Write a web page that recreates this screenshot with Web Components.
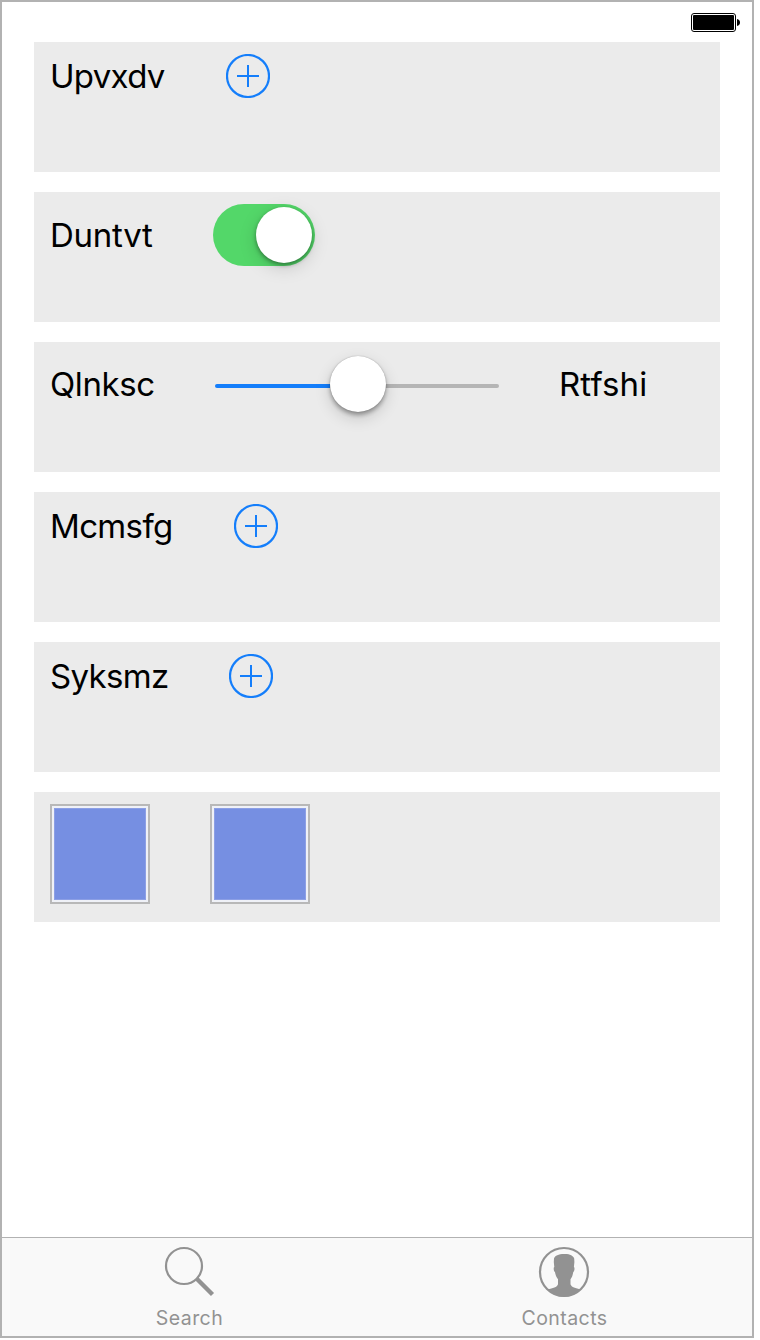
<!DOCTYPE html>
<html lang="en">
<head>
<meta charset="utf-8">
<title>Controls</title>
<style>
html,body{margin:0;background:#fff}
body{font-family:Inter,"Liberation Sans",sans-serif;color:#000}
</style>
</head>
<body>
<phone-screen>
  <status-bar slot="status"></status-bar>
  <control-row><text-label style="--w:116px;--ls:-.7px">Upvxdv</text-label><add-button></add-button></control-row>
  <control-row><text-label style="--w:103px;--ls:-.25px">Duntvt</text-label><toggle-switch></toggle-switch></control-row>
  <control-row><text-label style="--w:105px;--ls:-.4px">Qlnksc</text-label><value-slider></value-slider><text-label style="--w:90px;--ls:.1px">Rtfshi</text-label></control-row>
  <control-row><text-label style="--w:124px;--ls:-.65px">Mcmsfg</text-label><add-button></add-button></control-row>
  <control-row><text-label style="--w:119px;--ls:-.65px">Syksmz</text-label><add-button></add-button></control-row>
  <control-row><color-tile></color-tile><color-tile></color-tile></control-row>
  <tab-item slot="tabs">
    <svg slot="icon" width="52" height="52" viewBox="0 0 52 52" fill="none" stroke="#929292"><circle cx="21" cy="20" r="18" stroke-width="2.2"/><path d="M33.500 32.500L49.500 48.500" stroke-width="4.400"/></svg>Search</tab-item>
  <tab-item slot="tabs">
    <svg slot="icon" width="52" height="52" viewBox="0 0 52 52"><circle cx="26" cy="26" r="24" fill="none" stroke="#929292" stroke-width="2.200"/><path fill="#929292" d="M26 8c5.500-.3 9.300 1.500 10.200 4.500l.2 3.500-.5 5c1 .3.700 4.500-.7 5.200-.5 3-1.200 5-2.700 7v5c1 3 5 4 10.500 5.200C38.500 48 32.500 50.500 26 50.500S13.500 48 9.500 43.400C15 42.200 19 41.200 20 38.200v-5c-1.500-2-2.500-4-3-7-1.400-.7-1.700-4.900-.7-5.200l-.5-5 .2-3.500c1-3 4.500-4.500 10-4.500z"/></svg>Contacts</tab-item>
</phone-screen>
<script>
function define(name, html) {
  const template = document.createElement('template');
  template.innerHTML = html;
  customElements.define(name, class extends HTMLElement {
    constructor() {
      super();
      this.attachShadow({ mode: 'open' }).append(template.content.cloneNode(true));
    }
  });
}
define('phone-screen', `<style>
:host{display:flex;flex-direction:column;box-sizing:border-box;width:754px;height:1338px;border:2px solid #b2b2b2;background:#fff}
main{flex:1;display:flex;flex-direction:column;gap:20px;padding:0 32px}
nav{display:grid;grid-template-columns:374px 376px;height:99px;box-sizing:border-box;border-top:1px solid #b2b2b2;background:#f9f9f9}
</style><slot name="status"></slot><main><slot></slot></main><nav><slot name="tabs"></slot></nav>`);
define('status-bar', `<style>
:host{display:flex;justify-content:flex-end;height:40px;padding:11px 12px 0 0;box-sizing:border-box}
svg{display:block}
</style><svg width="50" height="20" viewBox="0 0 50 20"><rect x="1.500" y=".5" width="44" height="18" rx="2.500" fill="#fff" stroke="#000"/><rect x="3" y="2" width="41" height="15" rx="1"/><path d="M47 6c4 .8 4 6.200 0 7z"/></svg>`);
define('control-row', `<style>
:host{display:flex;box-sizing:border-box;height:130px;padding:12px 16px;background:#ebebeb;align-items:flex-start}
div{display:flex;align-items:center;gap:60px}
</style><div><slot></slot></div>`);
define('text-label', `<style>
:host{display:block;width:var(--w);font-size:33px;line-height:40px;letter-spacing:var(--ls);white-space:nowrap}
</style><slot></slot>`);
define('add-button', `<style>
:host{display:block;width:44px;height:44px}svg{display:block}
</style><svg width="44" height="44" viewBox="0 0 44 44" fill="none" stroke="#147efb" stroke-width="2"><circle cx="22" cy="22" r="21" stroke-width="2.200"/><path d="M11 22h22M22 11v22"/></svg>`);
define('toggle-switch', `<style>
:host{display:flex;justify-content:flex-end;box-sizing:border-box;width:102px;height:62px;padding:3px;border-radius:31px;background:#53d769}
i{width:56px;height:56px;border-radius:50%;background:#fff;box-shadow:0 5px 18px rgba(0,0,0,.15),0 2px 4px rgba(0,0,0,.38)}
</style><i></i>`);
define('value-slider', `<style>
:host{display:flex;align-items:center;width:284px;height:60px}
b{height:4px;margin-top:4px}
.on{width:115px;background:#147efb;border-radius:2px 0 0 2px}
.off{flex:1;background:#b5b5b5;border-radius:0 2px 2px 0}
i{position:relative;width:56px;height:56px;border-radius:50%;background:#fff;box-shadow:0 6px 16px rgba(0,0,0,.16),0 3px 4px rgba(0,0,0,.32),0 0 1px rgba(0,0,0,.35)}
</style><b class="on"></b><i></i><b class="off"></b>`);
define('color-tile', `<style>
:host{display:block;box-sizing:border-box;width:100px;height:100px;border:2px solid #b8b8b8;background:#eff1f7;padding:2px}
i{display:block;box-sizing:border-box;width:92px;height:92px;border:1px solid #8c9fe5;background:#768fe2}
</style><i></i>`);
define('tab-item', `<style>
:host{display:flex;flex-direction:column;align-items:center;padding-top:8px;color:#929292;font-size:19.500px;line-height:24px;letter-spacing:.45px}
::slotted(svg){display:block;margin-bottom:8px}
span{padding-left:1px}
</style><slot name="icon"></slot><span><slot></slot></span>`);
</script>
</body>
</html>
